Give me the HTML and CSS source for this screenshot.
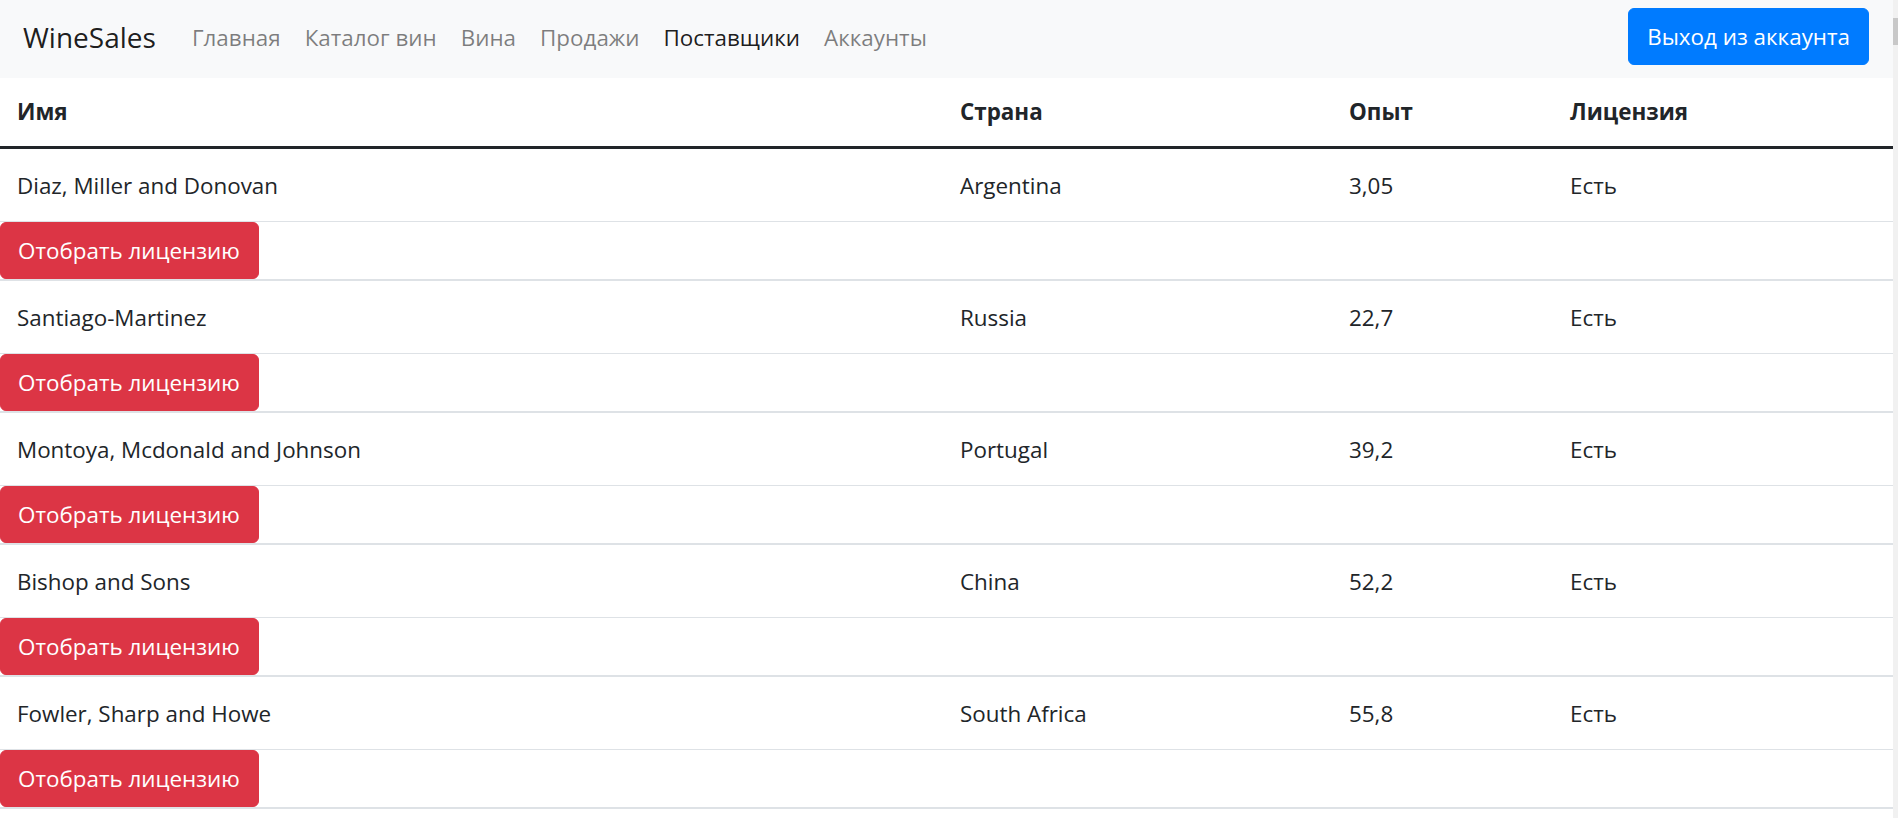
FILE: index.html
```html
<!DOCTYPE html>
<html lang="ru">
<head>
<meta charset="utf-8">
<title>WineSales — Поставщики</title>
<link rel="stylesheet" href="styles.css">
</head>
<body>
<div class="page">
  <div class="main">
    <nav class="navbar">
      <a class="brand" href="#">WineSales</a>
      <ul class="nav">
        <li><a class="nav-link" href="#">Главная</a></li>
        <li><a class="nav-link" href="#">Каталог вин</a></li>
        <li><a class="nav-link" href="#">Вина</a></li>
        <li><a class="nav-link" href="#">Продажи</a></li>
        <li><a class="nav-link active" href="#">Поставщики</a></li>
        <li><a class="nav-link" href="#">Аккаунты</a></li>
      </ul>
      <button class="btn btn-primary">Выход из аккаунта</button>
    </nav>
    <table class="table">
      <colgroup>
        <col class="c-name"><col class="c-country"><col class="c-exp"><col class="c-lic">
      </colgroup>
      <thead>
        <tr><th>Имя</th><th>Страна</th><th>Опыт</th><th>Лицензия</th></tr>
      </thead>
      <tbody>
        <tr class="data"><td>Diaz, Miller and Donovan</td><td>Argentina</td><td>3,05</td><td>Есть</td></tr>
        <tr class="action"><td colspan="4"><button class="btn btn-danger">Отобрать лицензию</button></td></tr>
        <tr class="data"><td>Santiago-Martinez</td><td>Russia</td><td>22,7</td><td>Есть</td></tr>
        <tr class="action"><td colspan="4"><button class="btn btn-danger">Отобрать лицензию</button></td></tr>
        <tr class="data"><td>Montoya, Mcdonald and Johnson</td><td>Portugal</td><td>39,2</td><td>Есть</td></tr>
        <tr class="action"><td colspan="4"><button class="btn btn-danger">Отобрать лицензию</button></td></tr>
        <tr class="data"><td>Bishop and Sons</td><td>China</td><td>52,2</td><td>Есть</td></tr>
        <tr class="action"><td colspan="4"><button class="btn btn-danger">Отобрать лицензию</button></td></tr>
        <tr class="data"><td>Fowler, Sharp and Howe</td><td>South Africa</td><td>55,8</td><td>Есть</td></tr>
        <tr class="action"><td colspan="4"><button class="btn btn-danger">Отобрать лицензию</button></td></tr>
      </tbody>
    </table>
  </div>
  <div class="scrollbar"><div class="thumb"></div></div>
</div>
</body>
</html>
```

FILE: styles.css
```css
html, body {
  margin: 0;
  padding: 0;
  height: 100%;
  overflow: hidden;
  background: #ffffff;
}

body {
  font-family: "Open Sans", "Noto Sans", "Liberation Sans", sans-serif;
  font-size: 22.4px;
  line-height: 36px;
  color: #212529;
}

.page {
  display: flex;
  height: 100%;
}

.main {
  flex: 1;
  min-width: 0;
}

.scrollbar {
  width: 5px;
  background: #f1f1f1;
}

.thumb {
  margin-top: 18px;
  height: 27px;
  background: #c8c8c8;
}

/* Navbar */
.navbar {
  display: flex;
  align-items: center;
  height: 78px;
  padding: 0 24px 3px 23px;
  box-sizing: border-box;
  background: #f8f9fa;
}

.brand {
  font-size: 28px;
  line-height: 45px;
  color: rgba(0, 0, 0, 0.9);
  text-decoration: none;
  margin-right: 24px;
}

.nav {
  display: flex;
  list-style: none;
  margin: 0;
  padding: 0;
  flex: 1;
}

.nav-link {
  display: block;
  padding: 9px 12px;
  color: rgba(0, 0, 0, 0.5);
  text-decoration: none;
}

.nav-link.active {
  color: rgba(0, 0, 0, 0.9);
}

.btn {
  font-family: inherit;
  font-size: 22.4px;
  line-height: 36px;
  padding: 9px 18px;
  border: 1.5px solid transparent;
  border-radius: 6px;
  color: #fff;
  cursor: pointer;
  box-sizing: border-box;
  height: 57px;
}

.btn-primary {
  background: #007bff;
  border-color: #007bff;
  margin-top: -2px;
}

.btn-danger {
  display: block;
  background: #dc3545;
  border-color: #dc3545;
  padding-left: 17px;
}

/* Table */
.table {
  width: 100%;
  border-collapse: collapse;
  table-layout: fixed;
}

.c-name { width: 943px; }
.c-country { width: 389px; }
.c-exp { width: 221px; }
.c-lic { width: auto; }

.table th {
  text-align: left;
  font-weight: 700;
  padding: 16px 18px 16px 17px;
  border-bottom: 3px solid #212529;
  vertical-align: middle;
}

.table .data td {
  padding: 19px 18px 17px 17px;
  border-bottom: 1px solid #dee2e6;
  vertical-align: middle;
}

.table .action td {
  padding: 0;
  height: 57px;
  border-bottom: 2px solid #dee2e6;
  vertical-align: top;
}
```
